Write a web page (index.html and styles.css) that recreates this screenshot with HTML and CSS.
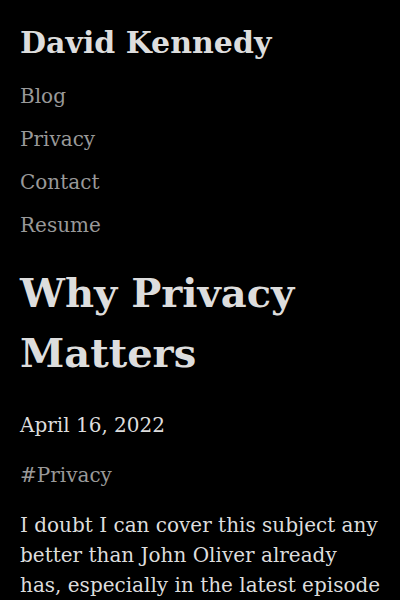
FILE: index.html
```html
<!DOCTYPE html>
<html lang="en">
<head>
<meta charset="utf-8">
<meta name="viewport" content="width=device-width, initial-scale=1">
<title>Why Privacy Matters</title>
<link rel="stylesheet" href="styles.css">
</head>
<body>
<header class="site-header">
<p class="site-title">David Kennedy</p>
<nav class="site-nav">
<a href="#blog">Blog</a>
<a href="#privacy">Privacy</a>
<a href="#contact">Contact</a>
<a href="#resume">Resume</a>
</nav>
</header>
<main class="post">
<h1 class="post-title">Why Privacy Matters</h1>
<p class="post-date"><time datetime="2022-04-16">April 16, 2022</time></p>
<p class="post-tags"><a href="#tag-privacy">#Privacy</a></p>
<p class="post-text">I doubt I can cover this subject any better than John Oliver already has, especially in the latest episode</p>
</main>
</body>
</html>
```
FILE: styles.css
```css
body {
  margin: 0;
  padding: 20px 18px 0 20px;
  background: #000;
  color: #ddd;
  font-family: "DejaVu Serif", serif;
  font-size: 20px;
  line-height: 30px;
}

a {
  color: #999;
  text-decoration: none;
}

.site-title {
  margin: 0 0 16px;
  font-size: 30px;
  font-weight: bold;
  line-height: 45px;
}

.site-nav {
  display: flex;
  flex-direction: column;
  align-items: flex-start;
  gap: 13px;
}

.post-title {
  margin: 23px 0 27px;
  font-size: 40px;
  line-height: 60px;
}

.post-date,
.post-tags {
  margin: 0 0 20px;
}

.post-text {
  margin: 0;
}
```
